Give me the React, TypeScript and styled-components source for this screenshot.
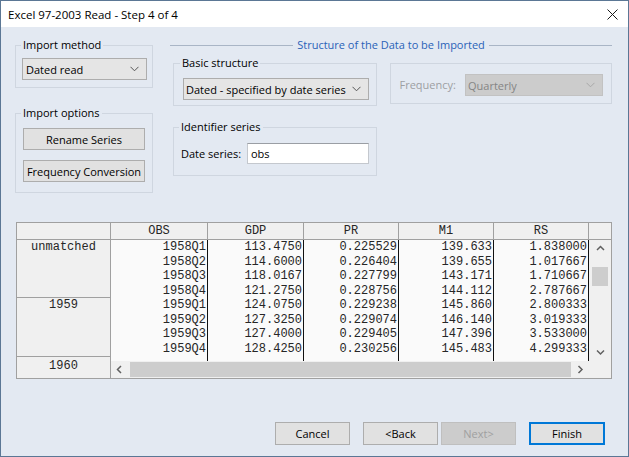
import React from "react";
import styled, { createGlobalStyle } from "styled-components";

const Global = createGlobalStyle`
  html, body { margin: 0; padding: 0; background: #ffffff; }
  body { font-family: "Open Sans", "Noto Sans", sans-serif; font-size: 11px; color: #000; }
  * { box-sizing: border-box; }
`;

const Window = styled.div`
  width: 629px;
  height: 457px;
  border: 1px solid #5b7795;
  background: #e3e9f2;
  display: flex;
  flex-direction: column;
  overflow: hidden;
`;

const TitleBar = styled.div`
  height: 26px;
  flex: 0 0 26px;
  background: #ffffff;
  display: flex;
  align-items: center;
  justify-content: space-between;
  padding-left: 7px;
  font-size: 11.5px;
`;

const CloseBox = styled.div`
  width: 11px;
  height: 11px;
  margin-right: 10px;
  display: flex;
`;

const Body = styled.div`
  flex: 1;
  display: flex;
  flex-direction: column;
  padding: 10px 16px 0 14px;
`;

const TopArea = styled.div`
  display: flex;
  align-items: flex-start;
  gap: 17px;
`;

const LeftCol = styled.div`
  width: 138px;
  display: flex;
  flex-direction: column;
`;

const RightCol = styled.div`
  width: 442px;
  display: flex;
  flex-direction: column;
`;

const Group = styled.fieldset<{ $w?: number; $pad: string; $mt?: number }>`
  margin: ${(p) => p.$mt ?? 0}px 0 0 0;
  width: ${(p) => (p.$w ? `${p.$w}px` : "auto")};
  border: 1px solid #cfd6e0;
  padding: ${(p) => p.$pad};
  min-width: 0;
  display: flex;
  flex-direction: column;
`;

const Legend = styled.legend<{ $offset: number }>`
  padding: 0 2px;
  margin-left: ${(p) => p.$offset}px;
  line-height: 16px;
  font-size: 11px;
`;

const PlainGroup = styled.div`
  width: 223px;
  margin-top: 8px;
  border: 1px solid #cfd6e0;
  padding: 10px 8px 7px 9px;
  display: flex;
  align-items: center;
  justify-content: space-between;
`;

const DisabledLabel = styled.span`
  color: #9d9fa3;
  line-height: 16px;
`;

const Combo = styled.div<{ $w: number; $disabled?: boolean; $textPad: number }>`
  width: ${(p) => p.$w}px;
  height: 22px;
  border: 1px solid ${(p) => (p.$disabled ? "#c2c2c2" : "#adadad")};
  background: ${(p) => (p.$disabled ? "#cccccc" : "#e5e5e5")};
  color: ${(p) => (p.$disabled ? "#858585" : "#000")};
  display: flex;
  align-items: center;
  justify-content: space-between;
  padding: 0 7px 0 ${(p) => p.$textPad}px;
  white-space: nowrap;
`;

const Btn = styled.div<{ $w: number; $h: number; $variant?: "disabled" | "default" }>`
  width: ${(p) => p.$w}px;
  height: ${(p) => p.$h}px;
  flex: 0 0 auto;
  display: flex;
  align-items: center;
  justify-content: center;
  background: ${(p) => (p.$variant === "disabled" ? "#cccccc" : "#e1e1e1")};
  border: ${(p) =>
    p.$variant === "default" ? "2px solid #0078d7" : p.$variant === "disabled" ? "1px solid #bfbfbf" : "1px solid #adadad"};
  color: ${(p) => (p.$variant === "disabled" ? "#a0a0a0" : "#000")};
  white-space: nowrap;
`;

const ButtonStack = styled.div`
  display: flex;
  flex-direction: column;
  gap: 10px;
`;

const StructureHeader = styled.div`
  height: 16px;
  display: flex;
  align-items: center;
`;

const HeaderLine = styled.div`
  flex: 1;
  height: 1px;
  background: #a9b5c6;
`;

const HeaderText = styled.span`
  padding: 0 4px;
  color: #2a62b8;
  line-height: 16px;
`;

const GroupRow = styled.div`
  display: flex;
  align-items: flex-start;
  gap: 13px;
  margin-top: 2px;
  padding-left: 3px;
`;

const IdentRow = styled.div`
  padding-left: 3px;
`;

const FieldRow = styled.div`
  display: flex;
  align-items: center;
`;

const TextBox = styled.div`
  margin-left: auto;
  width: 122px;
  height: 21px;
  background: #ffffff;
  border: 1px solid #c4c8ce;
  border-top-color: #9a9ea4;
  padding-left: 3px;
  display: flex;
  align-items: center;
`;

/* ---------- table ---------- */

const TableFrame = styled.div`
  margin: 29px 0 0 1px;
  width: 596px;
  height: 157px;
  border: 1px solid #a0a0a0;
  display: flex;
  background: #ffffff;
  font-family: "Liberation Mono", "Courier New", monospace;
  font-size: 12px;
  color: #262626;
`;

const RowHeaderCol = styled.div`
  width: 94px;
  flex: 0 0 94px;
  border-right: 1px solid #a0a0a0;
  display: flex;
  flex-direction: column;
  background: #f0f0f0;
`;

const CornerCell = styled.div`
  height: 17px;
  border-bottom: 1px solid #a0a0a0;
`;

const RowBlock = styled.div<{ $h: number; $last?: boolean }>`
  height: ${(p) => p.$h}px;
  border-bottom: ${(p) => (p.$last ? "none" : "1px solid #a0a0a0")};
  text-align: center;
  line-height: 14.5px;
  padding-top: ${(p) => (p.$last ? 2 : 0)}px;
`;

const Grid = styled.div`
  flex: 1;
  display: grid;
  grid-template-columns: 97px 96px 95px 95px 95px 22px;
  grid-template-rows: 17px 121px 17px;
`;

const HeadCell = styled.div<{ $last?: boolean }>`
  background: #f0f0f0;
  border-bottom: 1px solid #a0a0a0;
  border-right: ${(p) => (p.$last ? "none" : "1px solid #a0a0a0")};
  text-align: center;
  line-height: 16px;
`;

const DataCol = styled.div`
  background: #fafafa;
  border-right: 1px solid #111;
  text-align: right;
  padding-right: 1px;
  line-height: 14.5px;
`;

const VScroll = styled.div`
  background: #f0f0f0;
  display: flex;
  flex-direction: column;
  align-items: center;
`;

const ArrowBox = styled.div<{ $w: number; $h: number }>`
  width: ${(p) => p.$w}px;
  height: ${(p) => p.$h}px;
  flex: 0 0 auto;
  display: flex;
  align-items: center;
  justify-content: center;
`;

const VThumb = styled.div`
  width: 16px;
  height: 19px;
  margin-top: 10px;
  background: #cdcdcd;
`;

const Spacer = styled.div`
  flex: 1;
`;

const HScroll = styled.div`
  grid-column: 1 / 6;
  background: #f0f0f0;
  display: flex;
  align-items: center;
`;

const HThumb = styled.div`
  flex: 1;
  height: 15px;
  margin-left: 2px;
  background: #cdcdcd;
`;

const Corner = styled.div`
  background: #f0f0f0;
`;

const ButtonRow = styled.div`
  margin-top: 43px;
  padding-right: 7px;
  display: flex;
  justify-content: flex-end;
  gap: 13px;
`;

const Pair = styled.div`
  display: flex;
  gap: 3px;
`;

/* ---------- icons ---------- */

const ComboChevron = ({ color = "#555" }: { color?: string }) => (
  <svg width="9" height="6" viewBox="0 0 9 6">
    <polyline points="0.5,0.8 4.5,4.8 8.5,0.8" fill="none" stroke={color} strokeWidth="1" />
  </svg>
);

type Dir = "up" | "down" | "left" | "right";
const ScrollChevron = ({ dir }: { dir: Dir }) => {
  const pts: Record<Dir, string> = {
    up: "1,5 4.5,1.5 8,5",
    down: "1,1.5 4.5,5 8,1.5",
    left: "5,1 1.5,4.5 5,8",
    right: "1.5,1 5,4.5 1.5,8",
  };
  const vertical = dir === "up" || dir === "down";
  return (
    <svg width={vertical ? 9 : 7} height={vertical ? 7 : 9} viewBox={vertical ? "0 0 9 7" : "0 0 7 9"}>
      <polyline points={pts[dir]} fill="none" stroke="#606060" strokeWidth="1.5" />
    </svg>
  );
};

const CloseIcon = () => (
  <svg width="11" height="11" viewBox="0 0 11 11">
    <path d="M0.5 0.5 L10.5 10.5 M10.5 0.5 L0.5 10.5" stroke="#1a1a1a" strokeWidth="1" fill="none" />
  </svg>
);

/* ---------- data ---------- */

const columns: { name: string; values: string[] }[] = [
  { name: "OBS", values: ["1958Q1", "1958Q2", "1958Q3", "1958Q4", "1959Q1", "1959Q2", "1959Q3", "1959Q4"] },
  { name: "GDP", values: ["113.4750", "114.6000", "118.0167", "121.2750", "124.0750", "127.3250", "127.4000", "128.4250"] },
  { name: "PR", values: ["0.225529", "0.226404", "0.227799", "0.228756", "0.229238", "0.229074", "0.229405", "0.230256"] },
  { name: "M1", values: ["139.633", "139.655", "143.171", "144.112", "145.860", "146.140", "147.396", "145.483"] },
  { name: "RS", values: ["1.838000", "1.017667", "1.710667", "2.787667", "2.800333", "3.019333", "3.533000", "4.299333"] },
];

export default function App() {
  return (
    <>
      <Global />
      <Window>
        <TitleBar>
          <span>Excel 97-2003 Read - Step 4 of 4</span>
          <CloseBox>
            <CloseIcon />
          </CloseBox>
        </TitleBar>
        <Body>
          <TopArea>
            <LeftCol>
              <Group $pad="5px 6px 7px 6px">
                <Legend $offset={-1}>Import method</Legend>
                <Combo $w={125} $textPad={3}>
                  <span>Dated read</span>
                  <ComboChevron />
                </Combo>
              </Group>
              <Group $pad="7px 7px 10px 7px" $mt={17}>
                <Legend $offset={-2}>Import options</Legend>
                <ButtonStack>
                  <Btn $w={122} $h={22}>Rename Series</Btn>
                  <Btn $w={122} $h={22}>Frequency Conversion</Btn>
                </ButtonStack>
              </Group>
            </LeftCol>
            <RightCol>
              <StructureHeader>
                <HeaderLine />
                <HeaderText>Structure of the Data to be Imported</HeaderText>
                <HeaderLine />
              </StructureHeader>
              <GroupRow>
                <Group $w={204} $pad="7px 7px 5px 9px">
                  <Legend $offset={-3}>Basic structure</Legend>
                  <Combo $w={186} $textPad={2}>
                    <span>Dated - specified by date series</span>
                    <ComboChevron />
                  </Combo>
                </Group>
                <PlainGroup>
                  <DisabledLabel>Frequency:</DisabledLabel>
                  <Combo $w={138} $textPad={2} $disabled>
                    <span>Quarterly</span>
                    <ComboChevron color="#a8a8a8" />
                  </Combo>
                </PlainGroup>
              </GroupRow>
              <IdentRow>
                <Group $w={204} $pad="8px 7px 11px 7px" $mt={13}>
                  <Legend $offset={-2}>Identifier series</Legend>
                  <FieldRow>
                    <span>Date series:</span>
                    <TextBox>obs</TextBox>
                  </FieldRow>
                </Group>
              </IdentRow>
            </RightCol>
          </TopArea>

          <TableFrame>
            <RowHeaderCol>
              <CornerCell />
              <RowBlock $h={58}>unmatched</RowBlock>
              <RowBlock $h={59}>1959</RowBlock>
              <RowBlock $h={21} $last>
                1960
              </RowBlock>
            </RowHeaderCol>
            <Grid>
              {columns.map((c) => (
                <HeadCell key={c.name}>{c.name}</HeadCell>
              ))}
              <HeadCell $last />
              {columns.map((c) => (
                <DataCol key={c.name}>
                  {c.values.map((v) => (
                    <div key={v}>{v}</div>
                  ))}
                </DataCol>
              ))}
              <VScroll>
                <ArrowBox $w={22} $h={17}>
                  <ScrollChevron dir="up" />
                </ArrowBox>
                <VThumb />
                <Spacer />
                <ArrowBox $w={22} $h={17}>
                  <ScrollChevron dir="down" />
                </ArrowBox>
              </VScroll>
              <HScroll>
                <ArrowBox $w={17} $h={17}>
                  <ScrollChevron dir="left" />
                </ArrowBox>
                <HThumb />
                <ArrowBox $w={18} $h={17}>
                  <ScrollChevron dir="right" />
                </ArrowBox>
              </HScroll>
              <Corner />
            </Grid>
          </TableFrame>

          <ButtonRow>
            <Btn $w={75} $h={23}>Cancel</Btn>
            <Pair>
              <Btn $w={75} $h={23}>&lt;Back</Btn>
              <Btn $w={75} $h={23} $variant="disabled">
                Next&gt;
              </Btn>
            </Pair>
            <Btn $w={76} $h={23} $variant="default">
              Finish
            </Btn>
          </ButtonRow>
        </Body>
      </Window>
    </>
  );
}
